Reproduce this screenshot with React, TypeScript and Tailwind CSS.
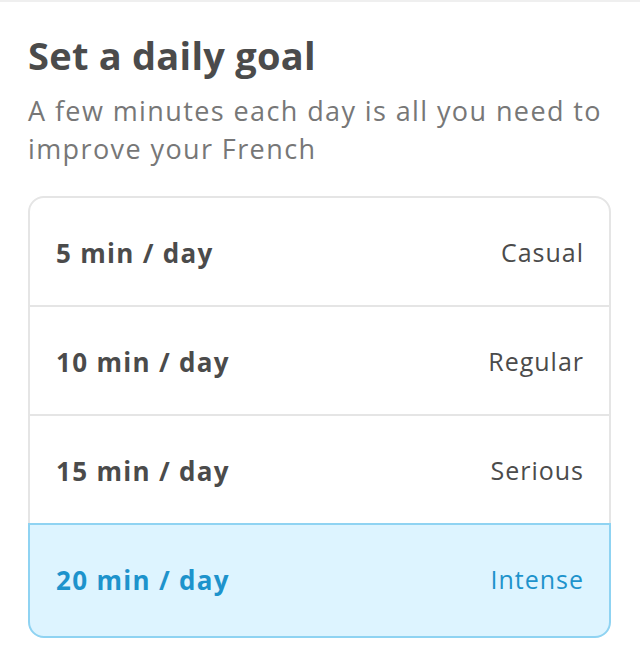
import { useState } from "react";

type Goal = {
    minutes: number;
    label: string;
};

const goals: Goal[] = [
    { minutes: 5, label: "Casual" },
    { minutes: 10, label: "Regular" },
    { minutes: 15, label: "Serious" },
    { minutes: 20, label: "Intense" },
];

const App = () => {
    const [selected, setSelected] = useState(20);

    return (
        <div className="min-h-[672px] w-[640px] bg-white border-t-2 border-[#efefef] font-['Open_Sans',sans-serif]">
            <div className="px-[28px] pt-[29px]">
                <h1 className="text-[38px] font-bold leading-[48px] tracking-[0.25px] text-[#4b4b4b]">
                    Set a daily goal
                </h1>
                <p className="mt-[13px] text-[27px] leading-[38px] tracking-[1.4px] text-[#777777]">
                    A few minutes each day is all you need to improve your French
                </p>

                <ul className="mt-[28px] w-[583px]">
                    {goals.map((goal, i) => {
                        const isActive = goal.minutes === selected;
                        const isFirst = i === 0;
                        const isLast = i === goals.length - 1;

                        return (
                            <li
                                key={goal.minutes}
                                onClick={() => setSelected(goal.minutes)}
                                className={`relative flex cursor-pointer items-center justify-between border-2 pl-[26px] pr-[25px] pt-[3px] ${
                                    i > 0 ? "-mt-[2px]" : ""
                                } ${isFirst ? "rounded-t-2xl" : ""} ${
                                    isLast ? "h-[115px] rounded-b-2xl pb-[4px]" : "h-[111px]"
                                } ${
                                    isActive
                                        ? "z-10 border-[#8fd3f2] bg-[#ddf4ff] text-[#1d93cc]"
                                        : "border-[#e5e5e5] bg-white text-[#4b4b4b]"
                                }`}
                            >
                                <span className="text-[26px] font-bold tracking-[1.3px]">
                                    {goal.minutes} min / day
                                </span>
                                <span className="text-[25px] tracking-[1px]">{goal.label}</span>
                            </li>
                        );
                    })}
                </ul>
            </div>
        </div>
    );
};

export default App;
